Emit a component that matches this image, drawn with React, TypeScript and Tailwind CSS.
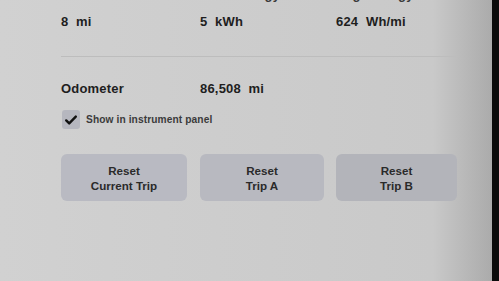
import React from "react";

const stats = [
  { label: "Distance", value: "8 mi" },
  { label: "Total Energy", value: "5 kWh" },
  { label: "Avg. Energy", value: "624 Wh/mi" },
];

const resets = [
  ["Reset", "Current Trip"],
  ["Reset", "Trip A"],
  ["Reset", "Trip B"],
];

export default function App() {
  return (
    <div
      className="flex w-[499px] h-[281px] overflow-hidden text-[#1e1e1e]"
      style={{ fontFamily: '"Liberation Sans", Arial, sans-serif' }}
    >
      {/* trip panel */}
      <div className="flex-1 pl-[61px] bg-linear-to-r from-[#d1d1d1] via-[#c9c9c9] via-[88%] to-[#ababab]">
        {/* labels, scrolled mostly out of view */}
        <div className="-mt-[13px] grid grid-cols-[139px_136px_1fr] h-[16px] text-[13px] leading-[16px] font-bold tracking-[0.2px] text-[#3a3a3a]">
          {stats.map((s) => (
            <div key={s.label}>{s.label}</div>
          ))}
        </div>

        <div className="mt-[11px] grid grid-cols-[139px_136px_1fr] h-[16px] text-[13px] leading-[16px] font-bold tracking-[0.2px]">
          {stats.map((s) => (
            <div key={s.value} className="whitespace-pre">
              {s.value.replace(" ", "  ")}
            </div>
          ))}
        </div>

        <div className="mt-[26px] h-px w-[396px] bg-[#bdbdbd]" />

        <div className="mt-[24px] grid grid-cols-[139px_1fr] h-[16px] text-[13px] leading-[16px] font-bold tracking-[0.2px]">
          <div>Odometer</div>
          <div className="whitespace-pre">86,508  mi</div>
        </div>

        {/* checkbox */}
        <div className="mt-[13px] flex items-center h-[19px] pl-px">
          <div className="w-[18px] h-[19px] rounded-[3px] bg-[#b6b7bf] flex items-center justify-center">
            <svg width="14" height="14" viewBox="0 0 14 14">
              <path
                d="M2.2 7.4l3 3L11.8 3.6"
                fill="none"
                stroke="#111"
                strokeWidth="2.4"
                strokeLinecap="round"
                strokeLinejoin="round"
              />
            </svg>
          </div>
          <span className="ml-[6px] text-[10.2px] font-bold tracking-[0.1px] text-[#3b3b3b]">
            Show in instrument panel
          </span>
        </div>

        {/* reset buttons */}
        <div className="mt-[25px] flex">
          {resets.map(([a, b], i) => (
            <button
              key={b}
              className={
                "h-[47px] rounded-[6px] flex flex-col items-center justify-center text-[11.6px] leading-[15px] font-bold text-[#2a2a2a] " +
                (i === 0
                  ? "w-[126px] bg-[#b9bac2]"
                  : i === 1
                  ? "w-[124px] ml-[13px] bg-[#b8b9c0]"
                  : "w-[121px] ml-[12px] bg-[#b3b4ba]")
              }
            >
              <span>{a}</span>
              <span>{b}</span>
            </button>
          ))}
        </div>
      </div>

      {/* screen bezel */}
      <div className="w-[7px] bg-[#0b0b0b]" />
    </div>
  );
}
